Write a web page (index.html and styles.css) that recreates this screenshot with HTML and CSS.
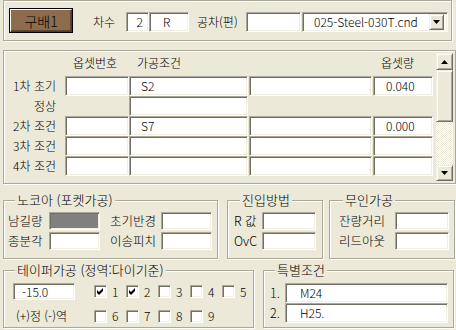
FILE: index.html
```html
<!DOCTYPE html>
<html lang="ko">
<head>
<meta charset="utf-8">
<title>구배</title>
<link rel="stylesheet" href="styles.css">
</head>
<body>
<div class="top etched">
  <div class="btn-default"><div class="btn-face">구배1</div></div>
  <span class="lbl lbl-chasu">차수</span>
  <div class="field f-cha">2</div>
  <div class="field f-r">R</div>
  <span class="lbl lbl-gongcha">공차(편)</span>
  <div class="field f-gc"></div>
  <div class="field combo">
    <span class="combo-text">025-Steel-030T.cnd</span>
    <span class="raised combo-btn"><svg width="7" height="4" viewBox="0 0 7 4"><path d="M0 0H7L3.5 4Z"/></svg></span>
  </div>
</div>

<div class="grid-panel etched">
  <div class="grid">
    <div class="hd"></div>
    <div class="hd">옵셋번호</div>
    <div class="hd">가공조건</div>
    <div class="hd"></div>
    <div class="hd">옵셋량</div>

    <div class="rl">1차 초기</div>
    <div class="field cell c1"></div>
    <div class="field cell c2">S2</div>
    <div class="field cell c3"></div>
    <div class="field cell c4">0.040</div>

    <div class="rl">정상</div>
    <div></div>
    <div class="field cell c2"></div>
    <div></div>
    <div></div>

    <div class="rl">2차 조건</div>
    <div class="field cell c1"></div>
    <div class="field cell c2">S7</div>
    <div class="field cell c3"></div>
    <div class="field cell c4">0.000</div>

    <div class="rl">3차 조건</div>
    <div class="field cell c1"></div>
    <div class="field cell c2"></div>
    <div class="field cell c3"></div>
    <div class="field cell c4"></div>

    <div class="rl">4차 조건</div>
    <div class="field cell c1"></div>
    <div class="field cell c2"></div>
    <div class="field cell c3"></div>
    <div class="field cell c4"></div>
  </div>
  <div class="vscroll">
    <div class="raised sb-btn"><svg width="7" height="4" viewBox="0 0 7 4"><path d="M0 4H7L3.5 0Z"/></svg></div>
    <div class="raised sb-thumb"></div>
    <div class="sb-track"></div>
    <div class="raised sb-btn sb-down"><svg width="7" height="4" viewBox="0 0 7 4"><path d="M0 0H7L3.5 4Z"/></svg></div>
  </div>
</div>

<div class="group-row row1">
  <div class="group etched g-nocore">
    <span class="g-title">노코아 (포켓가공)</span>
    <div class="g-grid nocore-grid">
      <span class="glbl">남길량</span>
      <div class="field gf gray"></div>
      <span></span>
      <span class="glbl">초기반경</span>
      <div class="field gf"></div>
      <span class="glbl">종분각</span>
      <div class="field gf"></div>
      <span></span>
      <span class="glbl">이송피치</span>
      <div class="field gf"></div>
    </div>
  </div>
  <div class="group etched g-entry">
    <span class="g-title">진입방법</span>
    <div class="g-grid entry-grid">
      <span class="glbl">R 값</span>
      <div class="field gf"></div>
      <span class="glbl">OvC</span>
      <div class="field gf"></div>
    </div>
  </div>
  <div class="group etched g-unmanned">
    <span class="g-title">무인가공</span>
    <div class="g-grid unmanned-grid">
      <span class="glbl">잔량거리</span>
      <div class="field gf"></div>
      <span class="glbl">리드아웃</span>
      <div class="field gf"></div>
    </div>
  </div>
</div>

<div class="group-row row2">
  <div class="group etched g-taper">
    <span class="g-title">테이퍼가공 (정역:다이기준)</span>
    <div class="taper-grid">
      <div class="field taper-val">-15.0</div>
      <label class="chk"><span class="box"><svg width="7" height="7" viewBox="0 0 7 7"><path d="M0 2L2 4L6 0V3L2 7L0 5Z"/></svg></span>1</label>
      <label class="chk"><span class="box"><svg width="7" height="7" viewBox="0 0 7 7"><path d="M0 2L2 4L6 0V3L2 7L0 5Z"/></svg></span>2</label>
      <label class="chk"><span class="box"></span>3</label>
      <label class="chk"><span class="box"></span>4</label>
      <label class="chk"><span class="box"></span>5</label>
      <span class="taper-note">(+)정 (-)역</span>
      <label class="chk"><span class="box"></span>6</label>
      <label class="chk"><span class="box"></span>7</label>
      <label class="chk"><span class="box"></span>8</label>
      <label class="chk"><span class="box"></span>9</label>
    </div>
  </div>
  <div class="group etched g-special">
    <span class="g-title">특별조건</span>
    <div class="special-grid">
      <span class="glbl">1.</span>
      <div class="field sp-field">M24</div>
      <span class="glbl">2.</span>
      <div class="field sp-field">H25.</div>
    </div>
  </div>
</div>
</body>
</html>
```

FILE: styles.css
```css
* { box-sizing: border-box; }
html, body { margin: 0; padding: 0; }
body {
  width: 456px;
  height: 330px;
  overflow: hidden;
  background: #ece9d8;
  font-family: "Noto Sans CJK KR", "Noto Sans", sans-serif;
  font-weight: 300;
  font-size: 12px;
  line-height: 1;
  color: #000;
}

.etched {
  border: 1px solid #aca899;
  box-shadow: inset 1px 1px 0 #fff, 1px 1px 0 #fff;
}
.field {
  background: #fff;
  border-style: solid;
  border-width: 1px;
  border-color: #aca899 #fff #fff #aca899;
  box-shadow: inset 1px 1px 0 #716f64, inset -1px -1px 0 #f1efe2;
  display: flex;
  align-items: center;
  white-space: nowrap;
}
.raised {
  background: #ece9d8;
  border-style: solid;
  border-width: 1px;
  border-color: #f1efe2 #716f64 #716f64 #f1efe2;
  box-shadow: inset 1px 1px 0 #fff, inset -1px -1px 0 #aca899;
  display: flex;
  align-items: center;
  justify-content: center;
}

/* top bar */
.top {
  margin-left: 3px;
  width: 449px;
  height: 41px;
  display: flex;
  align-items: flex-start;
  padding-left: 5px;
}
.btn-default {
  margin-top: 7px;
  width: 64px;
  height: 25px;
  border: 1px solid #000;
  display: flex;
}
.btn-face {
  flex: 1;
  background: #8c6c4d;
  border-style: solid;
  border-width: 1px;
  border-color: #fff #404040 #404040 #fff;
  box-shadow: inset -1px -1px 0 #5e4731;
  display: flex;
  align-items: center;
  justify-content: center;
  font-size: 14px;
  padding-top: 1px;
}
.lbl {
  margin-top: 11px;
  height: 20px;
  line-height: 20px;
  font-size: 12px;
}
.lbl-chasu { width: 33px; margin-left: 20px; }
.lbl-gongcha { width: 49px; margin-left: 8px; }
.top .field { margin-top: 11px; height: 20px; }
.f-cha { width: 23px; justify-content: flex-end; padding-right: 5px; }
.f-r { width: 40px; padding-left: 13px; }
.f-gc { width: 55px; }
.combo { width: 146px; margin-left: 1px; padding-left: 11px; }
.combo-text { flex: 1; }
.combo-btn { width: 15px; height: 16px; margin-right: 3px; }

/* offset grid panel */
.grid-panel {
  margin: 9px 0 0 3px;
  width: 453px;
  height: 134px;
  display: flex;
  align-items: flex-start;
}
.grid {
  display: grid;
  grid-template-columns: 61px 64px 120px 124px 60px;
  grid-template-rows: 25px repeat(5, 20px);
}
.hd {
  padding: 6px 0 0 8px;
  font-size: 12px;
}
.rl {
  text-align: right;
  padding-right: 9px;
  display: flex;
  align-items: center;
  justify-content: flex-end;
}
.cell { height: 20px; padding-left: 11px; }
.c1 { width: 64px; }
.c2 { width: 119px; }
.c3 { width: 123px; }
.c4 { width: 60px; padding-left: 12px; }

.vscroll {
  margin: 2px 0 0 3px;
  width: 17px;
  height: 128px;
  display: flex;
  flex-direction: column;
}
.sb-btn { height: 17px; flex: none; }
.sb-thumb { height: 52px; flex: none; }
.sb-track {
  flex: 1;
  background: repeating-conic-gradient(#fff 0 25%, #ece9d8 0 50%) 0 0 / 2px 2px;
}
.sb-down { height: 16px; }

/* group boxes */
.group-row { display: flex; }
.row1 { margin-top: 16px; height: 59px; }
.row2 { margin-top: 11px; height: 58px; }
.group { position: relative; height: 100%; }
.g-title {
  position: absolute;
  top: -9px;
  left: 11px;
  height: 15px;
  line-height: 15px;
  padding: 0 2px;
  background: #ece9d8;
  font-size: 13px;
  white-space: nowrap;
}
.g-grid {
  display: grid;
  grid-auto-rows: 18px;
  row-gap: 2px;
  padding-top: 11px;
}
.glbl {
  display: flex;
  align-items: center;
  font-size: 12.5px;
  white-space: nowrap;
}
.gf { height: 18px; }
.gray { background: #808080; }

.g-nocore { margin-left: 3px; width: 215px; }
.nocore-grid { grid-template-columns: 41px 51px 10px 51px 51px; padding-left: 4px; }
.g-entry { margin-left: 9px; width: 96px; }
.g-entry .g-title { left: 12px; }
.entry-grid { grid-template-columns: 28px 54px; padding-left: 6px; }
.g-unmanned { margin-left: 6px; width: 126px; }
.g-unmanned .g-title { left: 13px; }
.unmanned-grid { grid-template-columns: 56px 54px; padding-left: 9px; }

.g-taper { margin-left: 3px; width: 251px; }
.taper-grid {
  display: grid;
  grid-template-columns: 81px repeat(5, 32px);
  grid-template-rows: 17px 14px;
  row-gap: 9px;
  padding: 12px 0 0 9px;
}
.taper-val { width: 62px; height: 17px; padding-left: 8px; }
.taper-note { padding-left: 3px; display: flex; align-items: center; font-size: 12px; }
.chk { display: flex; align-items: center; gap: 5px; font-size: 12px; }
.box {
  width: 13px;
  height: 13px;
  flex: none;
  background: #fff;
  border-style: solid;
  border-width: 1px;
  border-color: #aca899 #fff #fff #aca899;
  box-shadow: inset 1px 1px 0 #716f64, inset -1px -1px 0 #f1efe2;
  display: flex;
  align-items: center;
  justify-content: center;
}

.g-special { margin-left: 9px; width: 191px; }
.g-special .g-title { left: 11px; }
.special-grid {
  display: grid;
  grid-template-columns: 15px 163px;
  grid-template-rows: 20px 20px;
  padding: 12px 0 0 6px;
}
.sp-field { height: 20px; padding-left: 14px; }
```
